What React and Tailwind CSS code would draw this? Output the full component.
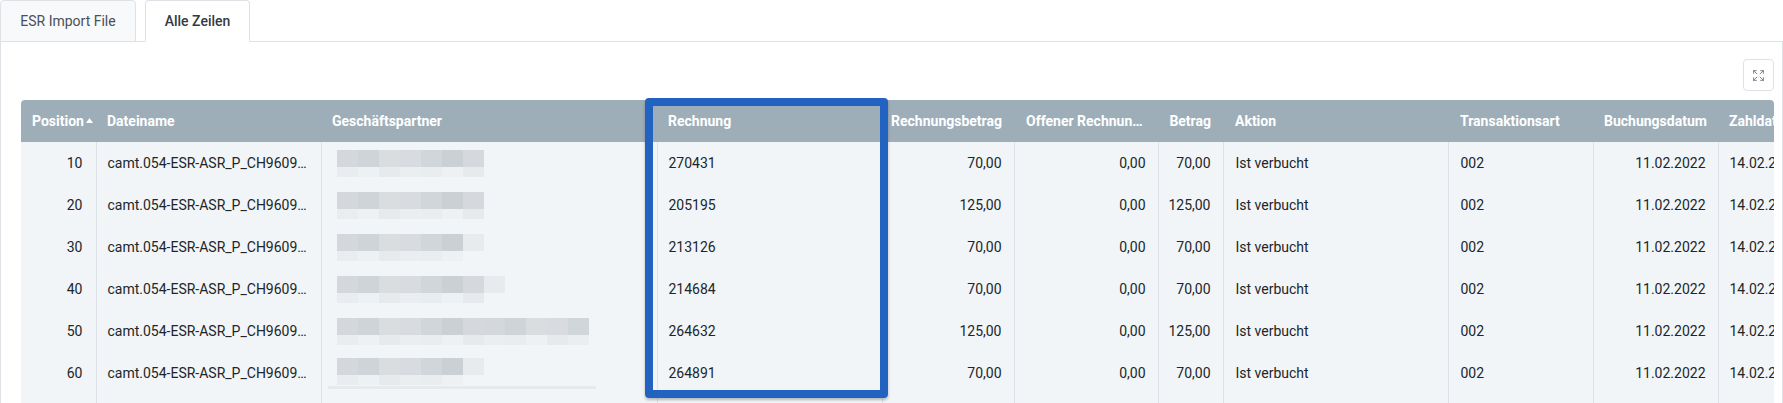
import { Expand } from "lucide-react";

const darkShades = [
  "bg-[#d4d8dc]",
  "bg-[#cbd0d4]",
  "bg-[#d8dce0]",
  "bg-[#cfd4d8]",
  "bg-[#d5d9dd]",
  "bg-[#d1d6da]",
  "bg-[#d9dde0]",
];
const lightShades = ["bg-[#e9edf0]", "bg-[#eef1f4]", "bg-[#e6eaed]", "bg-[#ebeef1]"];

const rows = [
  { pos: 10, invoice: "270431", amount: "70,00", paid: "70,00", dark: 7, faint: 0 },
  { pos: 20, invoice: "205195", amount: "125,00", paid: "125,00", dark: 7, faint: 0 },
  { pos: 30, invoice: "213126", amount: "70,00", paid: "70,00", dark: 6, faint: 1 },
  { pos: 40, invoice: "214684", amount: "70,00", paid: "70,00", dark: 7, faint: 1 },
  { pos: 50, invoice: "264632", amount: "125,00", paid: "125,00", dark: 12, faint: 0 },
  { pos: 60, invoice: "264891", amount: "70,00", paid: "70,00", dark: 6, faint: 1, line: true },
  { pos: 70, invoice: "265013", amount: "70,00", paid: "70,00", dark: 0, faint: 0 },
];

function Blurred({ dark, faint, line }) {
  if (!dark) return null;
  const cells = Array.from({ length: dark });
  return (
    <div className="relative flex flex-col">
      <div className="flex h-[17px]">
        {cells.map((_, i) => (
          <div key={i} className={`h-full w-[21px] ${darkShades[(i * 3) % darkShades.length]}`} />
        ))}
        {faint > 0 && <div className="h-full w-[21px] bg-[#e8ebee]" />}
      </div>
      <div className="flex h-[10px]">
        {cells.map((_, i) => (
          <div key={i} className={`h-full w-[21px] ${lightShades[i % lightShades.length]}`} />
        ))}
      </div>
      {line && <div className="-ml-[9px] mt-[1px] h-[3px] w-[268px] bg-[#e6eaed]" />}
    </div>
  );
}

const td = "border-r border-[#dce2e7] text-[14px] text-[#212529] whitespace-nowrap";

export default function App() {
  return (
    <div className="h-[403px] w-[1783px] overflow-hidden bg-white font-['Roboto',sans-serif]">
      <nav className="flex h-[42px] items-end gap-[9px] border-b border-[#dee2e6]">
        <button className="-mb-px flex h-[42px] w-[136px] items-center justify-center rounded-t-[4px] border border-[#dee2e6] bg-[#f8f9fa] text-[14px] text-[#495057]">
          ESR Import File
        </button>
        <button className="-mb-px flex h-[42px] w-[105px] items-center justify-center rounded-t-[4px] border border-[#dee2e6] border-b-white bg-white text-[14px] font-medium text-[#343a40]">
          Alle Zeilen
        </button>
      </nav>

      <section className="h-[400px] border-x border-[#dee2e6] pl-[20px] pr-[8px] pt-[17px]">
        <div className="flex justify-end">
          <button className="flex h-[32px] w-[31px] items-center justify-center rounded-[4px] border border-[#dee2e6] bg-white text-[#6c757d]">
            <Expand size={13} strokeWidth={1.6} />
          </button>
        </div>

        <div className="relative mt-[9px]">
          <div className="overflow-hidden rounded-t-[4px]">
            <table className="w-[1820px] table-fixed border-collapse">
              <colgroup>
                <col className="w-[75px]" />
                <col className="w-[225px]" />
                <col className="w-[336px]" />
                <col className="w-[225px]" />
                <col className="w-[132px]" />
                <col className="w-[144px]" />
                <col className="w-[65px]" />
                <col className="w-[225px]" />
                <col className="w-[145px]" />
                <col className="w-[125px]" />
                <col className="w-[123px]" />
              </colgroup>
              <thead>
                <tr className="h-[42px] bg-[#9eaeb9] text-[14px] font-bold text-white">
                  <th className="pl-[11px] text-left">
                    <span className="flex items-center gap-[2px]">
                      Position
                      <svg width="7" height="5" viewBox="0 0 7 5" className="mb-[2px]">
                        <path d="M0 5 L3.5 0 L7 5 Z" fill="white" />
                      </svg>
                    </span>
                  </th>
                  <th className="pl-[11px] text-left">Dateiname</th>
                  <th className="pl-[11px] text-left">Geschäftspartner</th>
                  <th className="pl-[11px] text-left">Rechnung</th>
                  <th className="pr-[12px] text-right">Rechnungsbetrag</th>
                  <th className="whitespace-nowrap pl-[12px] text-left">Offener Rechnun…</th>
                  <th className="pr-[12px] text-right">Betrag</th>
                  <th className="pl-[12px] text-left">Aktion</th>
                  <th className="pl-[12px] text-left">Transaktionsart</th>
                  <th className="pl-[11px] text-left">Buchungsdatum</th>
                  <th className="pl-[11px] text-left">Zahldatum</th>
                </tr>
              </thead>
              <tbody>
                {rows.map((r) => (
                  <tr key={r.pos} className="h-[42px] bg-[#f1f5f8]">
                    <td className={`${td} pr-[13px] text-right`}>{r.pos}</td>
                    <td className={`${td} pl-[11px]`}>camt.054-ESR-ASR_P_CH9609…</td>
                    <td className={`${td} pl-[15px]`}>
                      <Blurred dark={r.dark} faint={r.faint} line={r.line} />
                    </td>
                    <td className={`${td} pl-[11px]`}>{r.invoice}</td>
                    <td className={`${td} pr-[12px] text-right`}>{r.amount}</td>
                    <td className={`${td} pr-[12px] text-right`}>0,00</td>
                    <td className={`${td} pr-[12px] text-right`}>{r.paid}</td>
                    <td className={`${td} pl-[12px]`}>Ist verbucht</td>
                    <td className={`${td} pl-[12px]`}>002</td>
                    <td className={`${td} pr-[12px] text-right`}>11.02.2022</td>
                    <td className={`${td} pl-[11px]`}>14.02.2022</td>
                  </tr>
                ))}
              </tbody>
            </table>
          </div>
          <div className="pointer-events-none absolute left-[624px] top-[-2px] h-[300px] w-[243px] rounded-[4px] border-[8px] border-[#2262c0] shadow-[0_2px_3px_rgba(0,0,0,0.25)]" />
        </div>
      </section>
    </div>
  );
}
